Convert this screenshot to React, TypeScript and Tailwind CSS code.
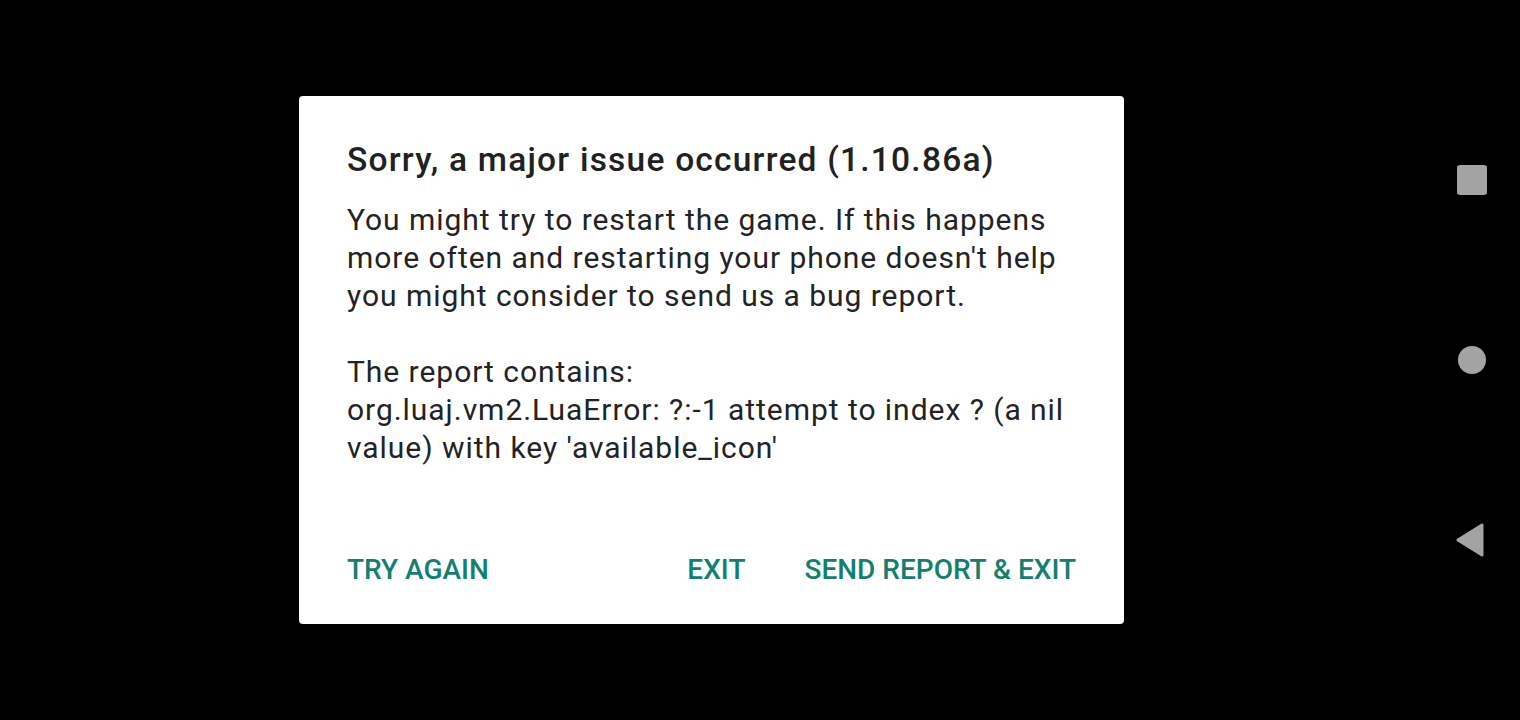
import React from 'react';

const font = { fontFamily: 'Roboto, "Noto Sans", sans-serif' };

const NavBar: React.FC = () => (
  <div className="w-[96px] h-full flex flex-col py-[90px]">
    <div className="h-[180px] flex items-center justify-center">
      <div className="w-[30px] h-[30px] rounded-[3px] bg-[#a3a3a3]" />
    </div>
    <div className="h-[180px] flex items-center justify-center">
      <div className="w-[28px] h-[28px] rounded-full bg-[#a3a3a3]" />
    </div>
    <div className="h-[180px] flex items-center justify-center">
      <svg width="30" height="34" viewBox="0 0 30 34" className="-ml-[4px]">
        <path d="M27 2 L3 17 L27 32 Z" fill="#a3a3a3" stroke="#a3a3a3" strokeWidth="3" strokeLinejoin="round" />
      </svg>
    </div>
  </div>
);

export default function App() {
  return (
    <div className="w-[1520px] h-[720px] bg-black flex overflow-hidden" style={font}>
      <div className="flex-1 flex items-center justify-center pr-[1px]">
        <div className="w-[825px] h-[528px] bg-white rounded-[4px] flex flex-col pt-[44px] px-[48px]">
          <h1 className="text-[33.5px] leading-[40px] font-medium text-[#212121] tracking-[1.22px]">
            Sorry, a major issue occurred (1.10.86a)
          </h1>
          <div className="mt-[21px] text-[30px] leading-[38px] text-[#232323] tracking-[0.96px]">
            <p>
              You might try to restart the game. If this happens
              <br />
              more often and restarting your phone doesn't help
              <br />
              you might consider to send us a bug report.
            </p>
            <p className="mt-[38px]">
              The report contains:
              <br />
              org.luaj.vm2.LuaError: ?:-1 attempt to index ? (a nil
              <br />
              value) with key 'available_icon'
            </p>
          </div>
          <div className="mt-auto mb-[30px] h-[48px] flex items-center text-[28px] font-medium text-[#12806f]">
            <button className="leading-[48px]">TRY AGAIN</button>
            <button className="ml-auto leading-[48px]">EXIT</button>
            <button className="ml-[59px] leading-[48px]">SEND REPORT &amp; EXIT</button>
          </div>
        </div>
      </div>
      <NavBar />
    </div>
  );
}
